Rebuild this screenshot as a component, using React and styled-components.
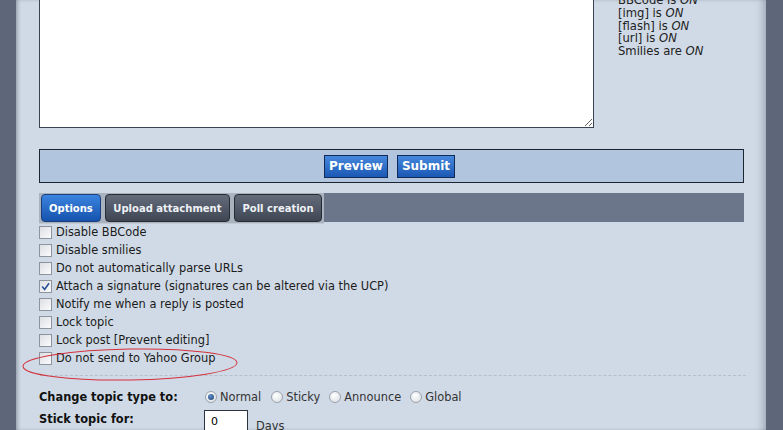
import React from 'react'
import styled, { createGlobalStyle } from 'styled-components'

const GlobalStyle = createGlobalStyle`
  html, body {
    margin: 0;
    padding: 0;
    background: #5d6779;
    font-family: "DejaVu Sans", Verdana, sans-serif;
  }
`;

const Page = styled.div`
  display: flex;
  height: 430px;
  overflow: hidden;
  padding: 0 17px 0 16px;
  background: #5d6779;
`;

const Panel = styled.div`
  flex: 1;
  position: relative;
  background: #d0dae6;
  box-shadow: inset 3px 0 4px -2px rgba(40, 50, 65, 0.45), inset -8px 0 8px -6px rgba(40, 50, 65, 0.35);
  padding: 0 22px 0 23px;
  font-size: 11.4px;
  color: #1a1a1a;
`;

const TopRow = styled.div`
  display: flex;
  gap: 24px;
  margin-top: -13px;
`;

const Editor = styled.textarea`
  box-sizing: border-box;
  width: 555px;
  height: 141px;
  margin: 0;
  border: 1px solid #3a4150;
  background: #fff;
  resize: both;
  display: block;
`;

const Hints = styled.div`
  padding-top: 7px;
  line-height: 12.8px;
  font-size: 11.6px;
  color: #222;
  em { font-style: italic; }
`;

const ButtonBar = styled.div`
  box-sizing: border-box;
  margin-top: 21px;
  height: 34px;
  border: 1px solid #1c2431;
  background: #b1c5df;
  display: flex;
  align-items: center;
  justify-content: center;
  gap: 9px;
  padding-right: 4px;
`;

const BlueButton = styled.button`
  box-sizing: border-box;
  height: 23px;
  padding: 0 4px;
  border: 1px solid #0f2a58;
  background: linear-gradient(#4689dd, #1b58b4);
  color: #fff;
  font-family: "DejaVu Sans", Verdana, sans-serif;
  font-weight: bold;
  font-size: 12px;
  cursor: pointer;
`;

const TabBar = styled.div`
  margin-top: 10px;
  height: 29px;
  background: #6b768a;
  display: flex;
  align-items: flex-start;
`;

const Tabs = styled.div`
  display: flex;
  gap: 4px;
  padding: 1px 2px 1px 2px;
  background: #a9b2bf;
  border-bottom: 1px solid #c2cad4;
`;

const Tab = styled.div`
  box-sizing: border-box;
  height: 28px;
  padding: 0 ${p => (p.$active ? 7 : 7.5)}px;
  display: flex;
  align-items: center;
  border-radius: 4px;
  border: 1px solid ${p => (p.$active ? '#1d3f79' : '#262b34')};
  background: ${p => (p.$active ? 'linear-gradient(#3b84e0, #1553ad)' : 'linear-gradient(#646c7c, #3f4553)')};
  color: ${p => (p.$active ? '#fff' : '#eef1f5')};
  font-weight: bold;
  font-size: 10px;
  white-space: nowrap;
`;

const OptionList = styled.div`
  margin-top: 1px;
`;

const OptionRow = styled.label`
  position: relative;
  display: flex;
  align-items: center;
  gap: 4px;
  height: 18px;
  white-space: nowrap;
`;

const Box = styled.span`
  box-sizing: border-box;
  width: 13px;
  height: 13px;
  border: 1px solid #8d949e;
  background: linear-gradient(135deg, #dcdfe3, #fbfbfc);
  display: flex;
  align-items: center;
  justify-content: center;
`;

const Mark = styled.svg`
  width: 9px;
  height: 9px;
`;

const Circle = styled.svg`
  position: absolute;
  left: -17px;
  top: -1px;
  width: 216px;
  height: 33px;
  pointer-events: none;
  overflow: visible;
`;

const Divider = styled.div`
  margin: 8px -2px 0 1px;
  border-top: 1px dashed #b4bfcc;
`;

const FieldRow = styled.div`
  display: flex;
  align-items: flex-start;
  margin-top: ${p => p.$top}px;
  min-height: 18px;
`;

const FieldLabel = styled.div`
  width: 166px;
  height: 18px;
  line-height: 18px;
  font-weight: bold;
  font-size: 11.4px;
  flex-shrink: 0;
  color: #111;
`;

const Radios = styled.div`
  display: flex;
  align-items: center;
  height: 18px;
`;

const RadioItem = styled.span`
  display: flex;
  align-items: center;
  gap: 3px;
  margin-right: ${p => p.$gap}px;
  color: #333;
`;

const Dot = styled.span`
  box-sizing: border-box;
  width: 12px;
  height: 12px;
  border-radius: 50%;
  border: 1px solid #9aa1ab;
  background: radial-gradient(circle at 40% 35%, #ffffff, #d7dbe0);
  display: flex;
  align-items: center;
  justify-content: center;
  &::after {
    content: '';
    display: ${p => (p.$on ? 'block' : 'none')};
    width: 6px;
    height: 6px;
    border-radius: 50%;
    background: radial-gradient(circle at 40% 35%, #5f8fc9, #1c3d6e);
  }
`;

const DaysInput = styled.input`
  box-sizing: border-box;
  width: 44px;
  height: 22px;
  margin: 0 0 0 -1px;
  padding: 0 6px;
  border: 1px solid #2c3440;
  background: #fff;
  font-family: "DejaVu Sans", Verdana, sans-serif;
  font-size: 11px;
`;

const Unit = styled.span`
  margin-left: 8px;
  padding-top: 9px;
  color: #333;
`;

const options = [
  { text: 'Disable BBCode' },
  { text: 'Disable smilies' },
  { text: 'Do not automatically parse URLs' },
  { text: 'Attach a signature (signatures can be altered via the UCP)', checked: true },
  { text: 'Notify me when a reply is posted' },
  { text: 'Lock topic' },
  { text: 'Lock post [Prevent editing]' },
  { text: 'Do not send to Yahoo Group', circled: true },
];

const topicTypes = [
  { label: 'Normal', on: true, gap: 10 },
  { label: 'Sticky', gap: 9 },
  { label: 'Announce', gap: 9 },
  { label: 'Global', gap: 0 },
];

const App = () => {
  return (
    <>
      <GlobalStyle />
      <Page>
        <Panel>
          <TopRow>
            <Editor />
            <Hints>
              <div>BBCode is <em>ON</em></div>
              <div>[img] is <em>ON</em></div>
              <div>[flash] is <em>ON</em></div>
              <div>[url] is <em>ON</em></div>
              <div>Smilies are <em>ON</em></div>
            </Hints>
          </TopRow>

          <ButtonBar>
            <BlueButton>Preview</BlueButton>
            <BlueButton>Submit</BlueButton>
          </ButtonBar>

          <TabBar>
            <Tabs>
              <Tab $active>Options</Tab>
              <Tab>Upload attachment</Tab>
              <Tab>Poll creation</Tab>
            </Tabs>
          </TabBar>

          <OptionList>
            {options.map(o => (
              <OptionRow key={o.text}>
                <Box>
                  {o.checked && (
                    <Mark viewBox="0 0 9 9">
                      <path d="M1.2 4.6 L3.6 7.4 L8 1.2" fill="none" stroke="#2a4f9a" strokeWidth="1.6" />
                    </Mark>
                  )}
                </Box>
                <span>{o.text}</span>
                {o.circled && (
                  <Circle viewBox="0 0 216 33">
                    <ellipse cx="108" cy="16.5" rx="107" ry="15.5" fill="none" stroke="#d4303a" strokeWidth="1" transform="rotate(-1 108 16.5)" />
                  </Circle>
                )}
              </OptionRow>
            ))}
          </OptionList>

          <Divider />

          <FieldRow $top={12}>
            <FieldLabel>Change topic type to:</FieldLabel>
            <Radios>
              {topicTypes.map(t => (
                <RadioItem key={t.label} $gap={t.gap}>
                  <Dot $on={t.on} />
                  {t.label}
                </RadioItem>
              ))}
            </Radios>
          </FieldRow>

          <FieldRow $top={4}>
            <FieldLabel>Stick topic for:</FieldLabel>
            <DaysInput defaultValue="0" />
            <Unit>Days</Unit>
          </FieldRow>
        </Panel>
      </Page>
    </>
  )
};

export default App;
